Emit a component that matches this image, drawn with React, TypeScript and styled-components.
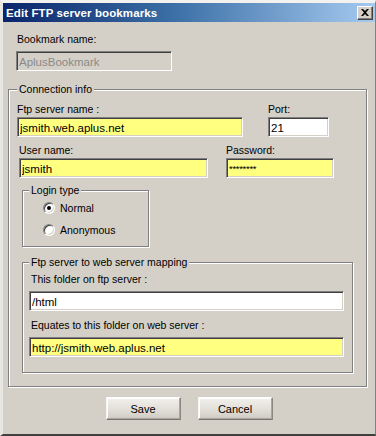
import React from "react";
import styled, { createGlobalStyle } from "styled-components";

const Global = createGlobalStyle`
  html, body { margin: 0; padding: 0; background: #d4d0c8; }
  body { font-family: "Liberation Sans", Arial, sans-serif; font-size: 11px; color: #000; }
  * { box-sizing: border-box; }
`;

const Window = styled.div`
  width: 376px;
  height: 436px;
  background: #d4d0c8;
  border-style: solid;
  border-width: 3px 1px 2px 3px;
  border-color: #f4f2ee #808080 #404040 #e8e6e0;
  display: flex;
  flex-direction: column;
`;

const TitleBar = styled.div`
  height: 19px;
  flex: none;
  background: linear-gradient(to right, #0a246a 0%, #3a6ea5 45%, #a6caf0 100%);
  display: flex;
  align-items: center;
  justify-content: space-between;
  padding: 0 2px 0 3px;
`;

const Title = styled.span`
  color: #fff;
  font-weight: bold;
  font-size: 11.5px;
  letter-spacing: 0.1px;
`;

const CloseButton = styled.button`
  width: 16px;
  height: 14px;
  padding: 0;
  background: #d4d0c8;
  border: 1px solid;
  border-color: #fff #404040 #404040 #fff;
  box-shadow: inset -1px -1px 0 #808080;
  display: flex;
  align-items: center;
  justify-content: center;
`;

const Body = styled.div`
  padding: 11px 8px 0 5px;
  display: flex;
  flex-direction: column;
`;

const BookmarkBlock = styled.div`
  padding-left: 8px;
  display: flex;
  flex-direction: column;
  margin-bottom: 12px;
`;

const Label = styled.label<{ $gap?: number; $indent?: number }>`
  display: block;
  line-height: 13px;
  font-size: 10.5px;
  margin-bottom: ${(p) => p.$gap ?? 1}px;
  padding-left: ${(p) => p.$indent ?? 0}px;
  white-space: nowrap;
`;

const TextBox = styled.input<{ $w: number; $bg?: string; $muted?: boolean; $small?: boolean }>`
  display: block;
  width: ${(p) => p.$w}px;
  height: 20px;
  margin: 0;
  padding: 1px 2px 0;
  font-family: "Liberation Sans", Arial, sans-serif;
  font-size: ${(p) => (p.$small ? "9.5px" : "11.5px")};
  letter-spacing: ${(p) => (p.$small ? "-0.3px" : "0")};
  color: ${(p) => (p.$muted ? "#8a8a8a" : "#000")};
  background: ${(p) => p.$bg ?? "#fff"};
  border: 1px solid;
  border-color: #808080 #fff #fff #808080;
  box-shadow: inset 1px 1px 0 #404040, inset -1px -1px 0 #d4d0c8;
  outline: none;
`;

const Group = styled.fieldset<{ $pad: string; $w?: number; $mt?: number; $ml?: number }>`
  margin: ${(p) => p.$mt ?? 0}px 0 0 ${(p) => p.$ml ?? 0}px;
  padding: ${(p) => p.$pad};
  width: ${(p) => (p.$w ? `${p.$w}px` : "auto")};
  min-width: 0;
  border: 1px solid #808080;
  box-shadow: inset 1px 1px 0 #fff, 1px 1px 0 #fff;
`;

const Legend = styled.legend`
  padding: 0 2px;
  line-height: 13px;
  font-size: 10.5px;
  background: #d4d0c8;
`;

const FieldRow = styled.div<{ $gap: number; $ml?: number; $mt?: number }>`
  display: flex;
  gap: ${(p) => p.$gap}px;
  margin-left: ${(p) => p.$ml ?? 0}px;
  margin-top: ${(p) => p.$mt ?? 0}px;
`;

const Field = styled.div`
  display: flex;
  flex-direction: column;
`;

const RadioRow = styled.div`
  display: flex;
  align-items: center;
  height: 16px;
  margin-left: 14px;
  gap: 5px;
  font-size: 10.5px;
  & + & { margin-top: 6px; }
`;

const RadioCircle = styled.span<{ $on?: boolean }>`
  width: 12px;
  height: 12px;
  border-radius: 50%;
  background: #fff;
  border: 1px solid;
  border-color: #808080 #fff #fff #808080;
  box-shadow: inset 1px 1px 0 #404040, inset -1px -1px 0 #d4d0c8;
  display: flex;
  align-items: center;
  justify-content: center;
  &::after {
    content: "";
    width: 4px;
    height: 4px;
    border-radius: 50%;
    background: ${(p) => (p.$on ? "#000" : "transparent")};
  }
`;

const MapField = styled.div<{ $mt?: number }>`
  display: flex;
  flex-direction: column;
  margin-top: ${(p) => p.$mt ?? 0}px;
`;

const ButtonBar = styled.div`
  display: flex;
  justify-content: center;
  gap: 17px;
  margin-top: 10px;
  padding-left: 3px;
`;

const PushButton = styled.button`
  width: 75px;
  height: 23px;
  padding: 0;
  font-family: "Liberation Sans", Arial, sans-serif;
  font-size: 11px;
  color: #000;
  background: linear-gradient(to bottom, #f2f0ec 0%, #e2dfd9 55%, #cfcbc3 100%);
  border: 1px solid;
  border-color: #fcfcfb #8c8880 #7a766f #f6f5f2;
  box-shadow: inset -1px -1px 0 #aaa69f, inset 1px 1px 0 #ffffff;
`;

export default function App() {
  return (
    <>
      <Global />
      <Window>
        <TitleBar>
          <Title>Edit FTP server bookmarks</Title>
          <CloseButton aria-label="Close">
            <svg width="8" height="7" viewBox="0 0 8 7">
              <path d="M0 0h2l2 2 2-2h2L5 3.5 8 7H6L4 5 2 7H0l3-3.5z" fill="#000" />
            </svg>
          </CloseButton>
        </TitleBar>
        <Body>
          <BookmarkBlock>
            <Label $gap={5} $indent={1}>Bookmark name:</Label>
            <TextBox $w={156} $bg="#d4d0c8" $muted readOnly value="AplusBookmark" />
          </BookmarkBlock>

          <Group $pad="7px 8px 13px 8px">
            <Legend>Connection info</Legend>
            <FieldRow $gap={25}>
              <Field>
                <Label>Ftp server name :</Label>
                <TextBox $w={226} $bg="#ffff80" readOnly value="jsmith.web.aplus.net" />
              </Field>
              <Field>
                <Label>Port:</Label>
                <TextBox $w={61} readOnly value="21" />
              </Field>
            </FieldRow>
            <FieldRow $gap={18} $ml={2} $mt={7}>
              <Field>
                <Label>User name:</Label>
                <TextBox $w={189} $bg="#ffff80" readOnly value="jsmith" />
              </Field>
              <Field>
                <Label>Password:</Label>
                <TextBox $w={108} $bg="#ffff80" $small readOnly value="********" />
              </Field>
            </FieldRow>

            <Group $pad="3px 6px 8px 6px" $w={127} $mt={6} $ml={5}>
              <Legend>Login type</Legend>
              <RadioRow>
                <RadioCircle $on />
                <span>Normal</span>
              </RadioRow>
              <RadioRow>
                <RadioCircle />
                <span>Anonymous</span>
              </RadioRow>
            </Group>

            <Group $pad="4px 6px 15px 6px" $w={331} $mt={9} $ml={5}>
              <Legend>Ftp server to web server mapping</Legend>
              <MapField>
                <Label $gap={5} $indent={2}>This folder on ftp server :</Label>
                <TextBox $w={315} readOnly value="/html" />
              </MapField>
              <MapField $mt={8}>
                <Label $gap={5} $indent={2}>Equates to this folder on web server :</Label>
                <TextBox $w={315} $bg="#ffff80" readOnly value="http://jsmith.web.aplus.net" />
              </MapField>
            </Group>
          </Group>

          <ButtonBar>
            <PushButton>Save</PushButton>
            <PushButton>Cancel</PushButton>
          </ButtonBar>
        </Body>
      </Window>
    </>
  );
}
